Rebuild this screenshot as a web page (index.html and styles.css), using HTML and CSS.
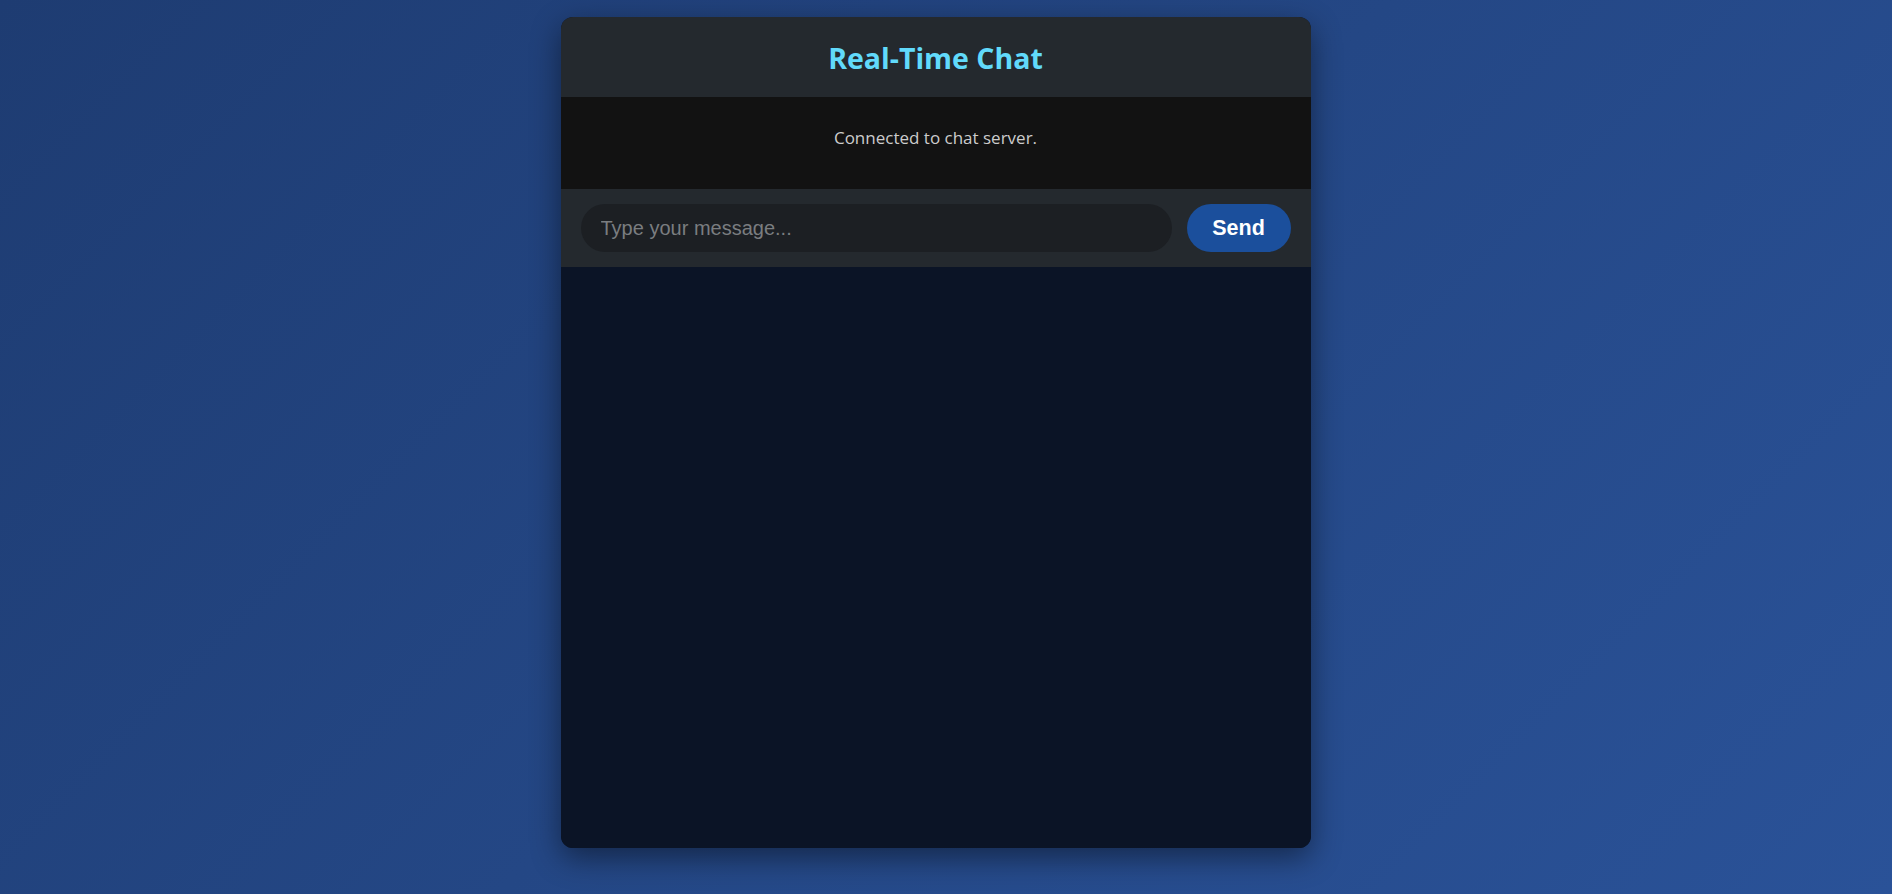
FILE: index.html
```html
<!DOCTYPE html>
<html lang="en">
<head>
<meta charset="utf-8">
<title>Real-Time Chat</title>
<link rel="stylesheet" href="styles.css">
</head>
<body>
<div class="page">
  <div class="chat">
    <header class="chat-header"><h1 class="chat-title">Real-Time Chat</h1></header>
    <div class="status"><p class="status-msg">Connected to chat server.</p></div>
    <form class="composer" onsubmit="return false">
      <input class="composer-input" type="text" placeholder="Type your message...">
      <button class="composer-send" type="submit">Send</button>
    </form>
    <div class="messages"></div>
  </div>
</div>
</body>
</html>
```

FILE: styles.css
```css
html, body {
  margin: 0;
  padding: 0;
  height: 100%;
}
body {
  background: linear-gradient(135deg, #1e3c72, #2a5298);
  font-family: "Segoe UI", "Open Sans", "Noto Sans", sans-serif;
}
.page {
  display: flex;
  justify-content: center;
  padding: 17px 21px 0 0;
}
.chat {
  width: 750px;
  height: 831px;
  display: flex;
  flex-direction: column;
  border-radius: 12px;
  overflow: hidden;
  background: #0b1426;
  box-shadow: 0 10px 30px rgba(0, 0, 0, 0.45);
}
.chat-header {
  background: #24292e;
  height: 80px;
  box-sizing: border-box;
  padding-top: 2px;
  display: flex;
  align-items: center;
  justify-content: center;
}
.chat-title {
  margin: 0;
  color: #61dafb;
  font-size: 28.5px;
  font-weight: 700;
  line-height: 40px;
}
.status {
  background: #121212;
  height: 92px;
  box-sizing: border-box;
  padding-top: 29px;
}
.status-msg {
  margin: 0;
  text-align: center;
  color: #cccccc;
  font-size: 17px;
  line-height: 24px;
}
.composer {
  margin: 0;
  background: #24292e;
  display: flex;
  gap: 15px;
  padding: 15px 20px;
}
.composer-input {
  flex: 1;
  height: 48px;
  box-sizing: border-box;
  border: none;
  outline: none;
  border-radius: 24px;
  background: #1c1f23;
  color: #ddd;
  padding: 0 20px;
  font-family: "Liberation Sans", Arial, sans-serif;
  font-size: 20px;
}
.composer-input::placeholder {
  color: #7a7d80;
}
.composer-send {
  width: 104px;
  height: 48px;
  border: none;
  border-radius: 24px;
  background: #1b4f9c;
  color: #ffffff;
  font-family: "Liberation Sans", Arial, sans-serif;
  font-weight: 700;
  font-size: 21.5px;
  padding: 0;
  cursor: pointer;
}
.messages {
  flex: 1;
  background: #0b1426;
}
```
